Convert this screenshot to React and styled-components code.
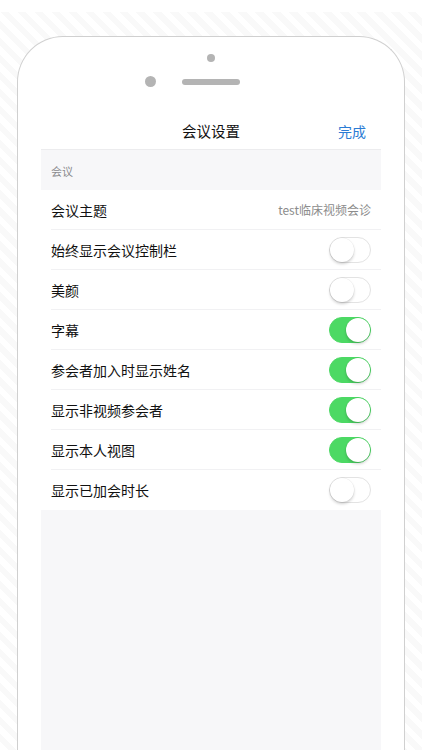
import React from 'react';
import styled, { createGlobalStyle } from 'styled-components';

const GlobalStyle = createGlobalStyle`
    html, body {
        margin: 0;
        padding: 0;
        background: #ffffff;
        overflow: hidden;
    }
    body {
        font-family: "Noto Sans CJK SC", "Noto Sans", sans-serif;
        -webkit-font-smoothing: antialiased;
    }
`;

const Backdrop = styled.div`
    margin-top: 12px;
    height: 738px;
    overflow: hidden;
    padding: 24px 0 0 17px;
    box-sizing: border-box;
    background: repeating-linear-gradient(
        45deg,
        #ffffff 0px,
        #ffffff 6px,
        #f9f9f9 6px,
        #f9f9f9 12px
    );
`;

const Phone = styled.div`
    width: 388px;
    height: 714px;
    box-sizing: border-box;
    background: #ffffff;
    border: 1px solid #d0d0d0;
    border-bottom: none;
    border-radius: 46px 46px 0 0;
    padding: 0 23px;
    display: flex;
    flex-direction: column;
`;

const Bezel = styled.div`
    height: 75px;
    display: flex;
    flex-direction: column;
    align-items: center;
`;

const Camera = styled.div`
    width: 8px;
    height: 8px;
    border-radius: 50%;
    background: #b4b4b4;
    margin-top: 17px;
`;

const SpeakerRow = styled.div`
    width: 100%;
    margin-top: 14px;
    display: grid;
    grid-template-columns: 1fr auto 1fr;
    align-items: center;
`;

const Sensor = styled.div`
    justify-self: end;
    width: 11px;
    height: 11px;
    border-radius: 50%;
    background: #b4b4b4;
    margin-right: 26px;
`;

const Speaker = styled.div`
    width: 58px;
    height: 6px;
    border-radius: 3px;
    background: #b4b4b4;
`;

const Screen = styled.div`
    flex: 1;
    display: flex;
    flex-direction: column;
    background: #f7f7f9;
`;

const NavBar = styled.div`
    height: 37px;
    background: #ffffff;
    border-bottom: 1px solid #ececee;
    display: grid;
    grid-template-columns: 1fr auto 1fr;
    align-items: center;
    padding: 0 15px;
`;

const NavTitle = styled.div`
    grid-column: 2;
    font-size: 14.5px;
    color: #111111;
`;

const NavAction = styled.div`
    justify-self: end;
    font-size: 14px;
    color: #2b7bd4;
`;

const SectionHeader = styled.div`
    height: 40px;
    display: flex;
    align-items: center;
    padding: 2px 10px 0;
    box-sizing: border-box;
    font-size: 11px;
    color: #8a8a8e;
`;

const List = styled.div`
    background: #ffffff;
    padding-left: 10px;
`;

const Row = styled.div`
    height: 40px;
    display: flex;
    align-items: center;
    justify-content: space-between;
    padding-right: 10px;
    box-sizing: border-box;
    border-bottom: ${(p) => (p.$last ? 'none' : '1px solid #f1f1f3')};
`;

const Label = styled.span`
    font-size: 14px;
    color: #111111;
`;

const Value = styled.span`
    font-size: 12px;
    color: #8c8c8c;
`;

const Toggle = styled.div`
    width: 42px;
    height: 26px;
    border-radius: 13px;
    box-sizing: border-box;
    position: relative;
    background: ${(p) => (p.$on ? '#4cd964' : '#ffffff')};
    border: 1px solid ${(p) => (p.$on ? '#4cd964' : '#e3e3e3')};
`;

const Knob = styled.div`
    position: absolute;
    top: 0;
    left: ${(p) => (p.$on ? '16px' : '0')};
    width: 24px;
    height: 24px;
    border-radius: 50%;
    background: #ffffff;
    box-shadow: 0 2px 3px rgba(0, 0, 0, 0.18), 0 0 0 0.5px rgba(0, 0, 0, 0.06);
`;

const settings = [
    { label: '始终显示会议控制栏', on: false },
    { label: '美颜', on: false },
    { label: '字幕', on: true },
    { label: '参会者加入时显示姓名', on: true },
    { label: '显示非视频参会者', on: true },
    { label: '显示本人视图', on: true },
    { label: '显示已加会时长', on: false },
];

const App = () => {
    return (
        <>
            <GlobalStyle />
            <Backdrop>
                <Phone>
                    <Bezel>
                        <Camera />
                        <SpeakerRow>
                            <Sensor />
                            <Speaker />
                        </SpeakerRow>
                    </Bezel>
                    <Screen>
                        <NavBar>
                            <NavTitle>会议设置</NavTitle>
                            <NavAction>完成</NavAction>
                        </NavBar>
                        <SectionHeader>会议</SectionHeader>
                        <List>
                            <Row>
                                <Label>会议主题</Label>
                                <Value>test临床视频会诊</Value>
                            </Row>
                            {settings.map((s, i) => (
                                <Row key={s.label} $last={i === settings.length - 1}>
                                    <Label>{s.label}</Label>
                                    <Toggle $on={s.on}>
                                        <Knob $on={s.on} />
                                    </Toggle>
                                </Row>
                            ))}
                        </List>
                    </Screen>
                </Phone>
            </Backdrop>
        </>
    );
};

export default App;
